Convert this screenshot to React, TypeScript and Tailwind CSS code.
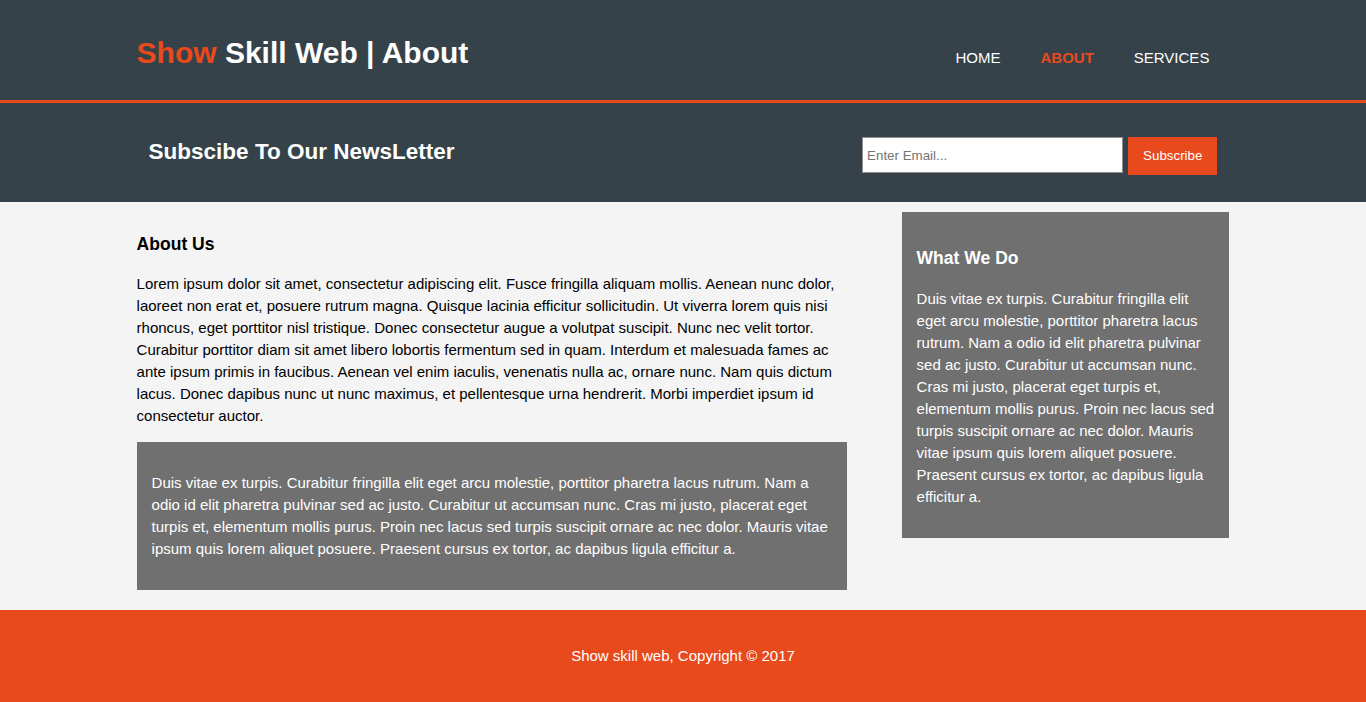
import React from "react";

export default function App() {
  return (
    <div className="min-h-screen bg-[#f4f4f4] text-black text-[15px] leading-[22px]" style={{ fontFamily: '"Liberation Sans", Arial, Helvetica, sans-serif' }}>
      <header className="bg-[#35424a] text-white pt-[29px] h-[103px] border-b-[3px] border-[#e8491d]">
        <div className="w-[80%] mx-auto flex justify-between items-start">
          <h1 className="text-[30px] font-bold leading-[48px] m-0">
            <span className="text-[#e8491d]">Show</span> Skill Web | About
          </h1>
          <nav className="mt-[17px]">
            <ul className="flex">
              <li className="px-[20px]"><a className="text-white uppercase text-[15px] leading-[24px]" href="#">Home</a></li>
              <li className="px-[20px]"><a className="text-[#e8491d] font-bold uppercase text-[15px] leading-[24px]" href="#">About</a></li>
              <li className="px-[20px]"><a className="text-white uppercase text-[15px] leading-[24px]" href="#">Services</a></li>
            </ul>
          </nav>
        </div>
      </header>

      <section className="bg-[#35424a] text-white p-[15px] h-[99px]">
        <div className="w-[80%] mx-auto flex justify-between items-start">
          <h1 className="text-[22.5px] font-bold leading-[36px] my-[16px]">Subscibe To Our NewsLetter</h1>
          <form className="flex items-start mt-[19px]" onSubmit={(e) => e.preventDefault()}>
            <input
              type="email"
              placeholder="Enter Email..."
              className="w-[261px] h-[36px] px-[4px] bg-white text-black border border-[#8f8f8f] text-[13.33px] placeholder:text-[#757575] outline-none"
              style={{ fontFamily: '"Liberation Sans", Arial, sans-serif' }}
            />
            <button
              type="submit"
              className="ml-[5px] h-[38px] px-[15px] bg-[#e8491d] text-white text-[13.33px]"
              style={{ fontFamily: '"Liberation Sans", Arial, sans-serif' }}
            >
              Subscribe
            </button>
          </form>
        </div>
      </section>

      <section className="w-[80%] mx-auto flex justify-between items-start">
        <article className="w-[65%] pt-[29px]">
          <h3 className="text-[17.55px] font-bold leading-[26px] mb-[16px]">About Us</h3>
          <p className="mb-[15px]">
            Lorem ipsum dolor sit amet, consectetur adipiscing elit. Fusce fringilla aliquam mollis. Aenean nunc dolor, laoreet non erat et, posuere rutrum magna. Quisque lacinia efficitur sollicitudin. Ut viverra lorem quis nisi rhoncus, eget porttitor nisl tristique. Donec consectetur augue a volutpat suscipit. Nunc nec velit tortor. Curabitur porttitor diam sit amet libero lobortis fermentum sed in quam. Interdum et malesuada fames ac ante ipsum primis in faucibus. Aenean vel enim iaculis, venenatis nulla ac, ornare nunc. Nam quis dictum lacus. Donec dapibus nunc ut nunc maximus, et pellentesque urna hendrerit. Morbi imperdiet ipsum id consectetur auctor.
          </p>
          <div className="bg-[#707070] text-white px-[15px] py-[30px]">
            <p>
              Duis vitae ex turpis. Curabitur fringilla elit eget arcu molestie, porttitor pharetra lacus rutrum. Nam a odio id elit pharetra pulvinar sed ac justo. Curabitur ut accumsan nunc. Cras mi justo, placerat eget turpis et, elementum mollis purus. Proin nec lacus sed turpis suscipit ornare ac nec dolor. Mauris vitae ipsum quis lorem aliquet posuere. Praesent cursus ex tortor, ac dapibus ligula efficitur a.
            </p>
          </div>
        </article>
        <aside className="w-[30%] mt-[10px]">
          <div className="bg-[#707070] text-white px-[15px] pt-[33px] pb-[30px]">
            <h3 className="text-[17.55px] font-bold leading-[26px] mb-[17px]">What We Do</h3>
            <p>
              Duis vitae ex turpis. Curabitur fringilla elit eget arcu molestie, porttitor pharetra lacus rutrum. Nam a odio id elit pharetra pulvinar sed ac justo. Curabitur ut accumsan nunc. Cras mi justo, placerat eget turpis et, elementum mollis purus. Proin nec lacus sed turpis suscipit ornare ac nec dolor. Mauris vitae ipsum quis lorem aliquet posuere. Praesent cursus ex tortor, ac dapibus ligula efficitur a.
            </p>
          </div>
        </aside>
      </section>

      <footer className="mt-[20px] bg-[#e8491d] text-white text-center py-[35px]">
        <p>Show skill web, Copyright © 2017</p>
      </footer>
    </div>
  );
}
